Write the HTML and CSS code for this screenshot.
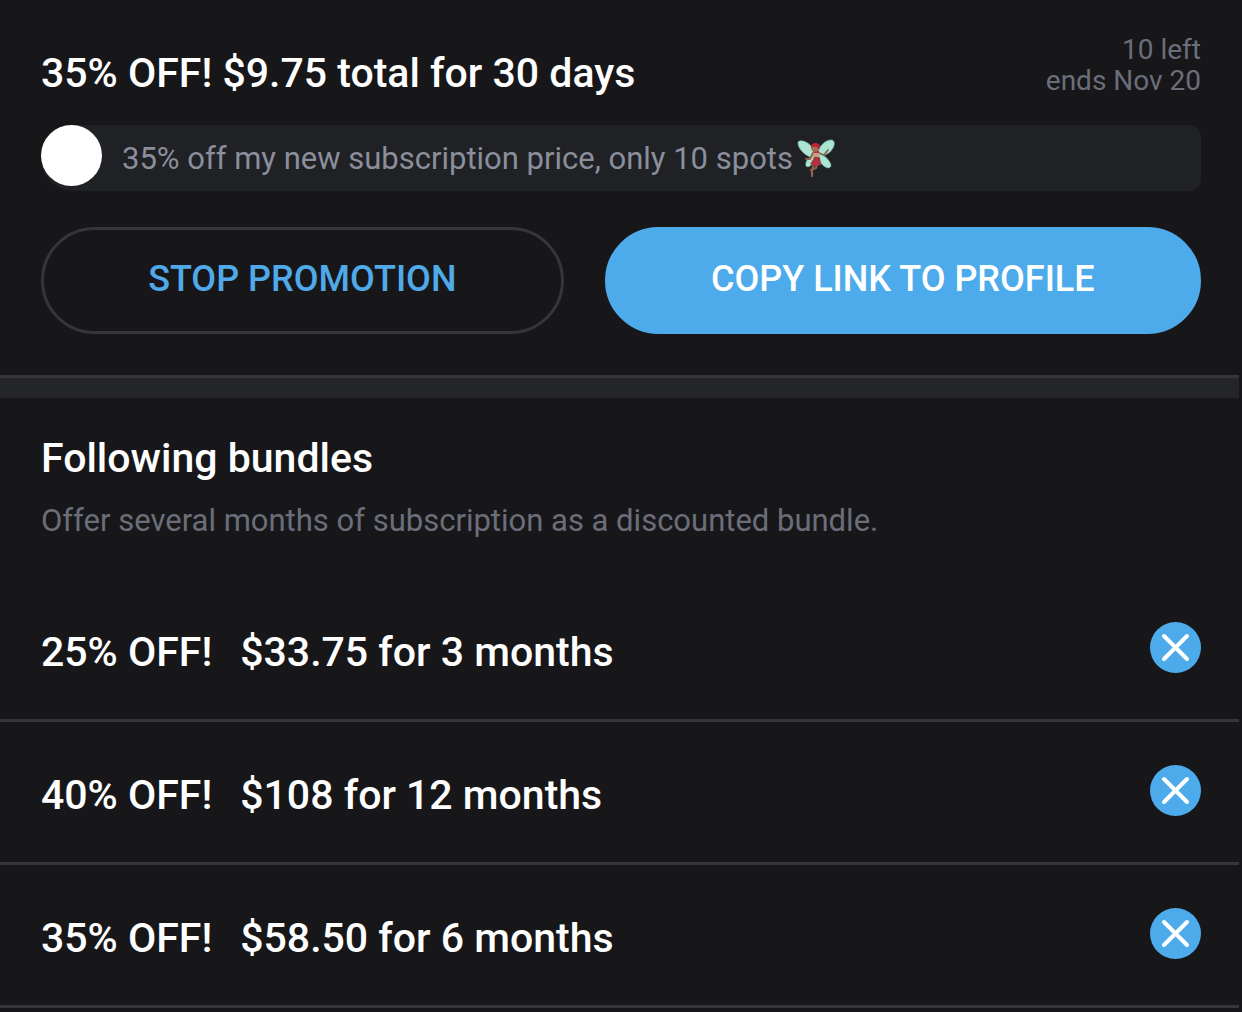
FILE: index.html
```html
<!DOCTYPE html>
<html lang="en">
<head>
    <meta charset="UTF-8">
    <meta name="viewport" content="width=device-width, initial-scale=1.0">
    <title>Subscription price and promotions</title>
    <link rel="stylesheet" href="styles.css">
</head>
<body>
    <main class="page">
        <section class="promo">
            <div class="promo-header">
                <h2>35% OFF! $9.75 total for 30 days</h2>
                <p class="promo-status">10 left<br>ends Nov 20</p>
            </div>
            <div class="promo-message">
                <span class="avatar"></span>
                <p>35% off my new subscription price, only 10 spots</p>
                <svg class="fairy" viewBox="0 0 38 38" aria-hidden="true">
                    <g fill="#a9e5d2" stroke="#7fc4b0" stroke-width="0.6">
                        <path d="M17 19C9 18 1 10 1 4c0-4 9-2 13 3 3 4 5 8 3 12z"/>
                        <path d="M20 18C20 9 28 0 35 1c5 2 1 11-5 14-4 2-7 3-10 3z"/>
                        <path d="M16 18c-5 0-8 5-7 9 3 2 6-1 8-5z"/>
                        <path d="M22 16c6-1 12 7 12 11-2 4-7 1-10-3z"/>
                    </g>
                    <path d="M16 14l-3 6-4 0M22 14l5 2 4-5" fill="none" stroke="#8d6049" stroke-width="1.8" stroke-linecap="round" stroke-linejoin="round"/>
                    <path d="M17 25l-2 6 0 6M20 25l-1 4-5 2" fill="none" stroke="#8d6049" stroke-width="2.2" stroke-linecap="round" stroke-linejoin="round"/>
                    <path d="M16 12h6l0 7 2 7-5 1-6-2 4-6z" fill="#b52f3e"/>
                    <circle cx="18" cy="9" r="3.8" fill="#a56f55"/>
                    <path d="M14 9c-1-5 7-7 9-2l-1 4c-2-4-5-4-8-2z" fill="#bd2538"/>
                    <path d="M16 14h6v4h-6z" fill="#c9a07f"/>
                </svg>
            </div>
            <div class="promo-actions">
                <button type="button" class="btn btn-outline">STOP PROMOTION</button>
                <button type="button" class="btn btn-primary">COPY LINK TO PROFILE</button>
            </div>
        </section>

        <section class="bundles">
            <div class="bundles-header">
                <h2>Following bundles</h2>
                <p>Offer several months of subscription as a discounted bundle.</p>
            </div>
            <ul class="bundle-list">
                <li>
                    <span class="discount">25% OFF!</span>
                    <span class="price">$33.75 for 3 months</span>
                    <button type="button" class="remove" aria-label="Remove bundle">
                        <svg viewBox="0 0 51 51"><path d="M14 14l23 23M37 14L14 37"/></svg>
                    </button>
                </li>
                <li>
                    <span class="discount">40% OFF!</span>
                    <span class="price">$108 for 12 months</span>
                    <button type="button" class="remove" aria-label="Remove bundle">
                        <svg viewBox="0 0 51 51"><path d="M14 14l23 23M37 14L14 37"/></svg>
                    </button>
                </li>
                <li>
                    <span class="discount">35% OFF!</span>
                    <span class="price">$58.50 for 6 months</span>
                    <button type="button" class="remove" aria-label="Remove bundle">
                        <svg viewBox="0 0 51 51"><path d="M14 14l23 23M37 14L14 37"/></svg>
                    </button>
                </li>
            </ul>
        </section>
    </main>
</body>
</html>
```
FILE: styles.css
```css
* {
    box-sizing: border-box;
}
body {
    margin: 0;
    font-family: Roboto, Arial, sans-serif;
    background-color: #17171a;
    color: #fefefe;
}
h2, p, ul {
    margin: 0;
    padding: 0;
}
h2 {
    font-size: 41px;
    font-weight: 500;
    line-height: 48px;
}
.page {
    margin-right: 3px;
}
.promo {
    padding: 33px 38px 41px 41px;
}
.promo-header {
    display: flex;
    align-items: center;
    justify-content: space-between;
    gap: 20px;
    padding-bottom: 28px;
}
.promo-header h2 {
    padding-top: 16px;
}
.promo-status {
    color: #6b6e79;
    font-size: 28px;
    line-height: 31px;
    text-align: right;
}
.promo-message {
    display: flex;
    align-items: center;
    min-height: 66px;
    background-color: #202125;
    border-radius: 40px 14px 14px 40px;
    color: #8a8f9b;
    font-size: 31px;
    line-height: 36px;
}
.promo-message p {
    padding-top: 2px;
}
.avatar {
    flex: none;
    align-self: flex-start;
    width: 61px;
    height: 61px;
    margin-right: 20px;
    border-radius: 50%;
    background-color: #fff;
}
.fairy {
    flex: none;
    width: 38px;
    height: 38px;
    margin-left: 4px;
}
.promo-actions {
    display: flex;
    gap: 41px;
    padding-top: 36px;
}
.btn {
    height: 107px;
    padding: 0 0 4px;
    border: 3px solid #4eabeb;
    border-radius: 54px;
    font-family: inherit;
    font-size: 36px;
    font-weight: 500;
    cursor: pointer;
}
.btn-outline {
    flex: 7;
    border-color: #35353a;
    background: none;
    color: #50a9e8;
}
.btn-primary {
    flex: 8;
    background-color: #4eabeb;
    color: #fff;
}
.bundles {
    border-top: 3px solid #35353a;
}
.bundles-header {
    padding: 36px 41px 40px;
    border-top: 20px solid #242529;
}
.bundles-header p {
    padding-top: 21px;
    color: #6b6e79;
    font-size: 31px;
    line-height: 36px;
}
.bundle-list {
    list-style: none;
}
.bundle-list li {
    display: flex;
    align-items: center;
    min-height: 143px;
    padding: 0 38px 4px 41px;
    border-bottom: 3px solid #35353a;
    font-size: 41px;
    font-weight: 500;
    line-height: 48px;
}
.discount {
    padding: 10px 28px 0 0;
}
.price {
    flex: 1;
    padding-top: 10px;
}
.remove {
    width: 51px;
    height: 51px;
    padding: 0;
    border: none;
    border-radius: 50%;
    background-color: #4eabeb;
    cursor: pointer;
}
.remove svg {
    display: block;
    fill: none;
    stroke: #fff;
    stroke-width: 4;
    stroke-linecap: round;
}
```
